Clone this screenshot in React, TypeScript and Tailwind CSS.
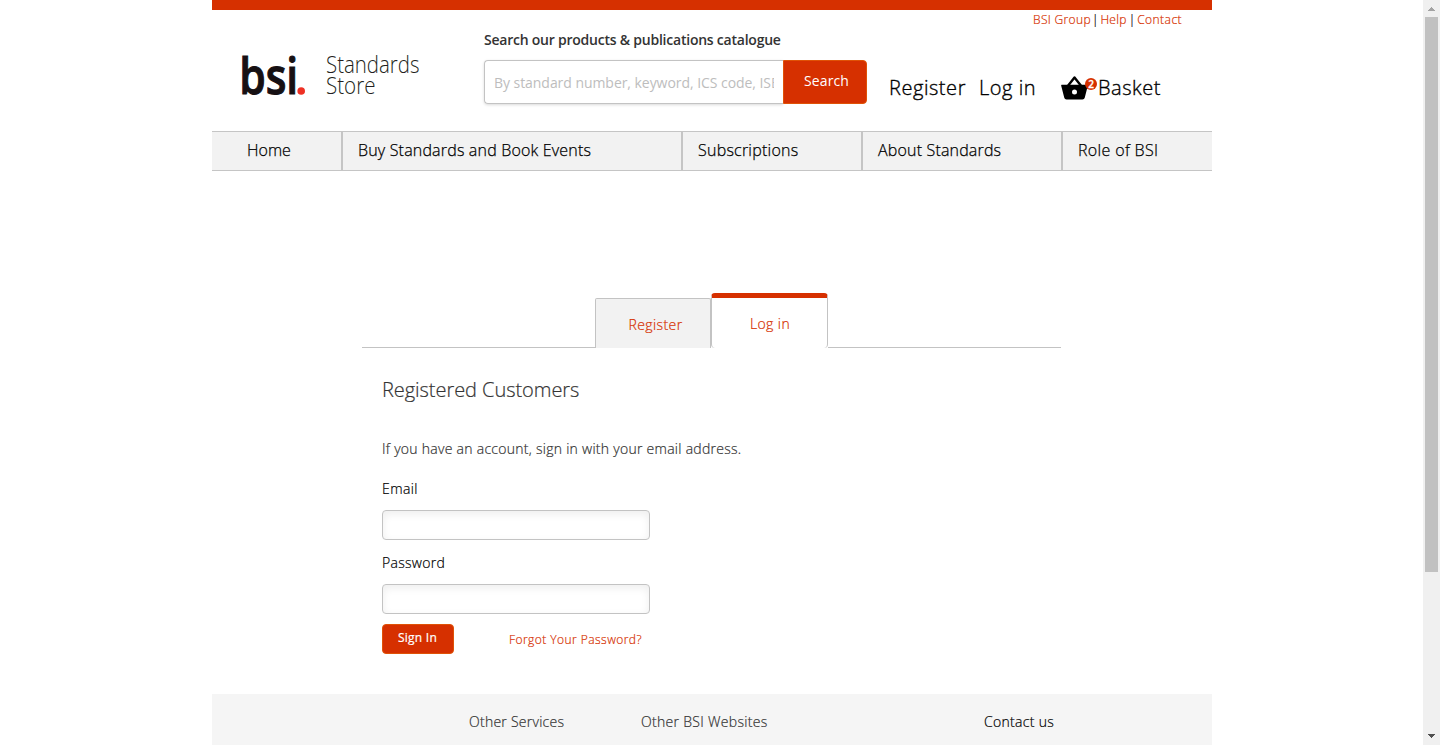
const RED = "text-[#d63000]";

function TopLinks() {
  return (
    <div className="flex h-5 justify-end pr-[30px] text-xs leading-5">
      <a href="#" className={`${RED} tracking-[0.34px]`}>BSI Group</a>
      <span className="px-[1px]">|</span>
      <a href="#" className={`${RED} pl-px tracking-[0.3px]`}>Help</a>
      <span className="px-[2px]">|</span>
      <a href="#" className={`${RED} tracking-[0.45px]`}>Contact</a>
    </div>
  );
}

function Logo() {
  return (
    <svg width="190" height="90" viewBox="0 -20 190 90" className="shrink-0 overflow-visible" role="img" aria-label="bsi. Standards Store">
      <text x="-2.8" y="47" fontFamily="Open Sans" fontWeight="600" fontSize="50.500" fill="#161013" stroke="#161013" strokeWidth="1.1" textLength="59" lengthAdjust="spacingAndGlyphs">bsi</text>
      <circle cx="59.2" cy="44" r="3.8" fill="#ee3124" />
      <g fontFamily="Open Sans" fontWeight="300" fontSize="24" fill="#231f20">
        <text x="84" y="26" textLength="93.500" lengthAdjust="spacingAndGlyphs">Standards</text>
        <text x="84" y="47" textLength="49.500" lengthAdjust="spacingAndGlyphs">Store</text>
      </g>
    </svg>
  );
}

function Basket() {
  return (
    <svg width="28" height="24" viewBox="0 0 28 24" className="shrink-0">
      <path d="M6 11 13.500 1.500 21 11" fill="none" stroke="#000" strokeWidth="2.400" strokeLinejoin="round" />
      <path fill="#000" fillRule="evenodd" d="M1 8.700h25c.6 0 1 .5.8 1.100l-3 11.800c-.3 1.200-1.200 2-2.400 2H5.600c-1.200 0-2.100-.8-2.400-2L.2 9.800C0 9.200.4 8.700 1 8.700zM13.500 13.500a2.500 2.500 0 1 0 0 5 2.500 2.500 0 0 0 0-5z" />
    </svg>
  );
}

function Header() {
  return (
    <header className="flex h-[101px]">
      <div className="h-[101px] w-[272px] pl-[30px]">
        <div className="-mt-[3px]">
          <Logo />
        </div>
      </div>
      <form className="w-[383px]">
        <label className="block h-[30px] text-sm leading-[20px] font-semibold tracking-[-0.23px] text-[#333] [-webkit-text-stroke:0]">
          Search our products &amp; publications catalogue
        </label>
        <div className="flex h-11">
          <input
            className="w-[299px] rounded-l border border-r-0 border-[#c3c3c3] px-[9px] pt-[2px] text-sm font-normal tracking-[-0.05px] text-black shadow-[0_1px_3px_rgba(0,0,0,0.15)] [-webkit-text-stroke:0] placeholder:text-[#bdbdbd]"
            placeholder="By standard number, keyword, ICS code, ISBN"
          />
          <button type="button" className="w-[84px] rounded-r border border-[#e05206] bg-[#d63000] pb-[3px] pl-[3px] text-sm font-normal tracking-[0.1px] text-white [-webkit-text-stroke:0]">
            Search
          </button>
        </div>
      </form>
      <div className="mt-11 flex h-7 items-center pl-[22px] text-xl leading-7 [-webkit-text-stroke:0.35px]">
        <a href="#" className="w-[90px] tracking-[0.55px]">Register</a>
        <a href="#" className="w-[82px] tracking-[0.55px]">Log in</a>
        <a href="#" className="relative flex items-center tracking-[0.55px]">
          <Basket />
          <span className="absolute top-[4px] left-6 flex h-3 w-3 items-center justify-center rounded-full bg-[#d63000] text-[10px] leading-3 font-semibold tracking-normal text-white [-webkit-text-stroke:0.3px]">2</span>
          <span className="pl-[9px]">Basket</span>
        </a>
      </div>
    </header>
  );
}

function Nav() {
  return (
    <nav className="flex h-10 border-y border-[#c5c5c5] bg-[#f2f2f2] text-base leading-[37px] [-webkit-text-stroke:0.25px]">
      <a href="#" className="w-[131px] border-r-2 border-[#c5c5c5] pl-[35px]">Home</a>
      <a href="#" className="w-[340px] border-r-2 border-[#c5c5c5] pl-[15px] tracking-[0.18px]">Buy Standards and Book Events</a>
      <a href="#" className="w-[180px] border-r-2 border-[#c5c5c5] pl-[15px] tracking-[0.23px]">Subscriptions</a>
      <a href="#" className="w-[200px] border-r-2 border-[#c5c5c5] pl-[15px] tracking-[0.17px]">About Standards</a>
      <a href="#" className="pl-[15px] tracking-[0.35px]">Role of BSI</a>
    </nav>
  );
}

function Tabs() {
  return (
    <div className="flex h-[55px] items-end text-sm">
      <div className="w-[233px] border-b border-[#c3c3c3]" />
      <a href="#" className={`${RED} flex h-[50px] w-[116px] items-center justify-center rounded-t-[2px] border border-b-0 border-[#c3c3c3] bg-[#f2f2f2] pt-[3px] pl-[5px] tracking-[0.4px]`}>Register</a>
      <a href="#" className={`${RED} flex h-[55px] w-[117px] items-center justify-center rounded-[4px] border-x border-t-[5px] border-x-[#c3c3c3] border-t-[#d63000] pt-[2px] pl-px tracking-[0.4px]`}>Log in</a>
      <div className="w-[233px] border-b border-[#c3c3c3]" />
    </div>
  );
}

function LoginForm() {
  const field = "block h-[30px] w-[268px] rounded border border-[#c3c3c3] bg-white px-2 shadow-[inset_0_3px_8px_rgba(0,0,0,0.07)]";
  return (
    <form className="px-5 pt-[28px] text-sm">
      <h2 className="h-[59px] text-xl leading-7 tracking-[-0.05px] text-[#333]">Registered Customers</h2>
      <p className="h-10 leading-7 tracking-[0.27px] text-[#333]">If you have an account, sign in with your email address.</p>
      <label className="block h-[35px] leading-7 tracking-[0.4px]">Email</label>
      <input type="email" className={field} />
      <label className="block h-11 pt-[9px] leading-7 tracking-[0.3px]">Password</label>
      <input type="password" className={field} />
      <div className="flex items-center pt-[10px]">
        <button type="button" className="h-[30px] w-[72px] rounded border border-[#e05206] bg-[#d63000] pr-px pb-[3px] text-xs font-medium tracking-[0.25px] text-white">Sign In</button>
        <a href="#" className={`${RED} pt-[2px] pl-[55px] text-xs tracking-[0.45px]`}>Forgot Your Password?</a>
      </div>
    </form>
  );
}

function Scrollbar() {
  return (
    <div className="flex w-[17px] shrink-0 flex-col items-center bg-[#f0f0f0]">
      <svg width="17" height="17" shapeRendering="crispEdges"><path d="M5 11h7L8.500 7z" fill="#a3a3a3" /></svg>
      <div className="h-[555px] w-[13px] bg-[#c1c1c1]" />
      <svg width="17" height="17" className="mt-auto" shapeRendering="crispEdges"><path d="M5 6h7L8.500 10z" fill="#505050" /></svg>
    </div>
  );
}

export default function App() {
  return (
    <div className="flex h-[745px] w-[1440px] overflow-hidden bg-white font-['Open_Sans','Noto_Sans',sans-serif] font-light text-black [-webkit-text-stroke:0.2px]">
      <div className="flex grow">
        <div className="ml-[212px] flex w-[1000px] flex-col">
          <div className="h-[10px] bg-[#d63000]" />
          <TopLinks />
          <Header />
          <Nav />
          <main className="mt-[122px] ml-[150px] w-[699px]">
            <Tabs />
            <LoginForm />
          </main>
          <footer className="mt-10 flex h-[51px] bg-[#f5f5f5] pt-[14px] pl-[257px] text-sm leading-7">
            <span className="w-[172px] tracking-[0.25px] text-[#333]">Other Services</span>
            <span className="w-[343px] tracking-[0.3px] text-[#333]">Other BSI Websites</span>
            <span className="tracking-[0.3px]">Contact us</span>
          </footer>
        </div>
      </div>
      <Scrollbar />
    </div>
  );
}
